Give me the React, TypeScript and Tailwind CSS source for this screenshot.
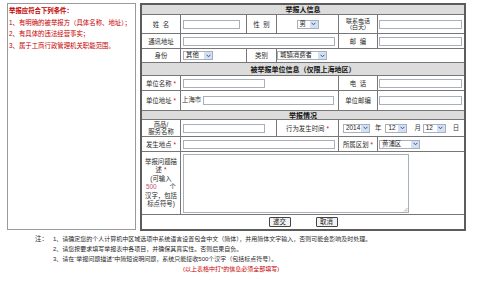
import React from 'react'

const font = "font-['Liberation_Sans','Noto_Sans_CJK_SC',sans-serif]"

const Arrow = () => (
  <span className="flex h-full w-[8px] items-center justify-center bg-[#d3dff2]">
    <svg width="5" height="4" viewBox="0 0 5 4">
      <path d="M0.6 0.8 L2.5 2.8 L4.4 0.8" fill="none" stroke="#35569a" strokeWidth="1" />
    </svg>
  </span>
)

const Select = ({ text, className = '' }: { text: string; className?: string }) => (
  <div className={`flex h-[9px] items-center border border-[#a7b0bb] bg-white ${className}`}>
    <span className="flex-1 pl-[2px] text-[6.4px] leading-none text-[#222]">{text}</span>
    <Arrow />
  </div>
)

const Input = ({ className = '' }: { className?: string }) => (
  <div className={`h-[9px] border border-[#a7b0bb] bg-white ${className}`} />
)

const Star = () => <span className="ml-[2px] text-[#e00000]">*</span>

const Label = ({ children }: { children: React.ReactNode }) => (
  <div className="flex items-center justify-center bg-white text-center text-[6.4px] leading-[7px] text-[#2a2a2a]">
    {children}
  </div>
)

const Header = ({ children }: { children: React.ReactNode }) => (
  <div className="col-span-6 flex items-center justify-center bg-[#dcdcdc] text-[7px] font-bold leading-none text-[#111]">
    {children}
  </div>
)

const Cell = ({ className = '', children }: { className?: string; children?: React.ReactNode }) => (
  <div className={`flex items-center bg-white ${className}`}>{children}</div>
)

export default function App() {
  return (
    <div className={`h-[284px] w-[500px] overflow-hidden bg-white ${font}`}>
      <div className="flex pt-[3px]">
        <div className="ml-[7px] h-[227px] w-[129px] border border-[#9a9a9a] pl-px pt-px text-[6.4px] leading-[11.5px] text-[#c40000]">
          <div className="font-bold">举报应符合下列条件：</div>
          <div>1、有明确的被举报方（具体名称、地址）；</div>
          <div>2、有具体的违法经营事实；</div>
          <div>3、属于工商行政管理机关职能范围。</div>
        </div>

        <div className="ml-[4px] w-[326px] border-2 border-[#5c5c5c]">
          <div className="grid grid-cols-[38px_65px_29px_61px_38px_86px] grid-rows-[9px_18px_14px_13px_12px_14px_19px_8px_16px_14px_62px_14px] gap-px bg-[#777]">
            <Header>举报人信息</Header>

            <Label>姓&nbsp;&nbsp;名</Label>
            <Cell className="pl-[2px]"><Input className="w-[57px]" /></Cell>
            <Label>性&nbsp;&nbsp;别</Label>
            <Cell className="justify-center"><Select text="男" className="w-[22px]" /></Cell>
            <Label><span className="text-[6px] leading-[6.5px]">联系电话<br />(白天)</span></Label>
            <Cell className="pl-px"><Input className="w-[83px]" /></Cell>

            <Label>通讯地址</Label>
            <Cell className="col-span-3 pl-[2px]"><Input className="w-[152px]" /></Cell>
            <Label>邮&nbsp;&nbsp;编</Label>
            <Cell className="pl-px"><Input className="w-[83px]" /></Cell>

            <Label>身份</Label>
            <Cell className="pl-[2px]"><Select text="其他" className="w-[30px]" /></Cell>
            <Label>类别</Label>
            <Cell className="col-span-3"><Select text="城镇消费者" className="w-[50px]" /></Cell>

            <Header>被举报单位信息（仅限上海地区）</Header>

            <Label>单位名称<Star /></Label>
            <Cell className="col-span-3 pl-[2px]"><Input className="w-[82px]" /></Cell>
            <Label>电&nbsp;&nbsp;话</Label>
            <Cell className="pl-px"><Input className="w-[83px]" /></Cell>

            <Label>单位地址<Star /></Label>
            <Cell className="col-span-3 pl-px">
              <span className="text-[6.4px] leading-none text-[#333]">上海市</span>
              <Input className="ml-[2px] w-[131px]" />
            </Cell>
            <Label>单位邮编</Label>
            <Cell className="pl-px"><Input className="w-[83px]" /></Cell>

            <Header>举报情况</Header>

            <Label>商品/<br />服务名称</Label>
            <Cell className="col-span-2 pl-[2px]"><Input className="w-[82px]" /></Cell>
            <Label>行为发生时间<Star /></Label>
            <Cell className="col-span-2 pl-[4px] text-[6.4px] leading-none text-[#333]">
              <Select text="2014" className="w-[27px]" />
              <span className="ml-[5px]">年</span>
              <Select text="12" className="ml-[4px] w-[22px]" />
              <span className="ml-[7px]">月</span>
              <Select text="12" className="ml-[2px] w-[23px]" />
              <span className="ml-[7px]">日</span>
            </Cell>

            <Label>发生地点<Star /></Label>
            <Cell className="col-span-3 pl-[2px]"><Input className="w-[152px]" /></Cell>
            <Label>所属区划<Star /></Label>
            <Cell className="pl-px"><Select text="黄浦区" className="w-[41px]" /></Cell>

            <div className="flex flex-col items-center justify-center bg-white text-center text-[6.4px] leading-[8.5px] text-[#2a2a2a]">
              <span>举报问题描</span>
              <span>述<Star /></span>
              <span>(可输入</span>
              <span className="flex w-[30px] justify-between"><span className="text-[#c0506a]">500</span><span>个</span></span>
              <span>汉字，包括</span>
              <span>标点符号)</span>
            </div>
            <Cell className="col-span-5 pl-[2px]">
              <div className="relative h-[59px] w-[226px] border border-[#a7b0bb] bg-white">
                <svg className="absolute bottom-0 right-0" width="5" height="5" viewBox="0 0 5 5">
                  <path d="M1 4.5 L4.5 1 M3 4.5 L4.5 3" stroke="#999" strokeWidth="0.8" />
                </svg>
              </div>
            </Cell>

            <Cell className="col-span-6 justify-center gap-[25px]">
              <button className="h-[10px] w-[22px] rounded-[1px] border border-[#444] bg-[#f2f2f2] text-[6.4px] leading-none text-[#222]">递交</button>
              <button className="h-[10px] w-[22px] rounded-[1px] border border-[#444] bg-[#f2f2f2] text-[6.4px] leading-none text-[#222]">取消</button>
            </Cell>
          </div>
        </div>
      </div>

      <div className="mt-[3px] flex text-[6px] leading-[10px] text-[#2a2a2a]">
        <div className="ml-[35px] w-[18px] text-[6.4px]">注：</div>
        <div>
          <div>1、请确定您的个人计算机中区域选项中系统语言设置包含中文（简体），并用简体文字输入，否则可能会影响及时处理。</div>
          <div>2、请您按要求填写举报表中各项目，并确保其真实性。否则后果自负。</div>
          <div>3、请在“举报问题描述”中简短说明问题，系统只能接收500个汉字（包括标点符号）。</div>
          <div className="pl-[130px] text-[#c40000]">(以上表格中打*的信息必须全部填写)</div>
        </div>
      </div>
    </div>
  )
}
